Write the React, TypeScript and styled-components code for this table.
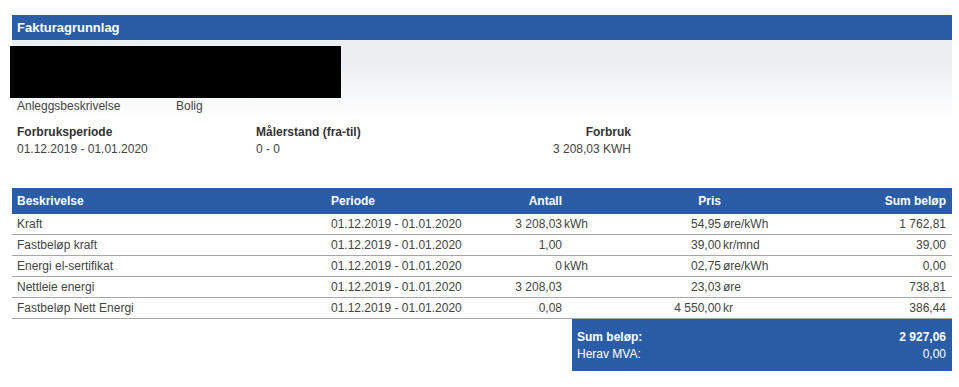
import React from "react";
import styled, { createGlobalStyle } from "styled-components";

const GlobalStyle = createGlobalStyle`
  html, body {
    margin: 0;
    padding: 0;
    background: #ffffff;
  }
  body {
    font-family: "Liberation Sans", Arial, sans-serif;
    font-size: 12px;
    color: #444444;
  }
`;

const BLUE = "#2a5da5";

const Page = styled.div`
  width: 940px;
  padding: 15px 7px 0 12px;
`;

const TitleBar = styled.div`
  height: 25px;
  background: ${BLUE};
  color: #ffffff;
  font-size: 13px;
  font-weight: bold;
  display: flex;
  align-items: center;
  padding-left: 5px;
`;

const InfoArea = styled.div`
  background: linear-gradient(to bottom, #eceff1 0px, #eceff1 25px, #ffffff 78px);
  padding-top: 6px;
`;

const Redacted = styled.div`
  width: 331px;
  height: 52px;
  margin-left: -2px;
  background: #000000;
`;

const FacilityRow = styled.div`
  display: flex;
  padding-left: 5px;
  height: 15px;
  line-height: 15px;
  margin-top: 1px;
`;

const FacilityLabel = styled.span`
  width: 159px;
`;

const UsageGrid = styled.div`
  display: grid;
  grid-template-columns: 239px 239px 136px;
  padding-left: 5px;
  margin-top: 10px;
  line-height: 17px;
`;

const UsageCell = styled.div<{ $right?: boolean }>`
  display: flex;
  flex-direction: column;
  align-items: ${(p) => (p.$right ? "flex-end" : "flex-start")};
`;

const UsageLabel = styled.span`
  font-weight: bold;
  color: #333333;
`;

const Table = styled.div`
  margin-top: 30px;
`;

const Row = styled.div<{ $head?: boolean }>`
  display: grid;
  grid-template-columns: 314px 150px 124px 200px 152px;
  align-items: center;
  height: ${(p) => (p.$head ? "26px" : "20px")};
  background: ${(p) => (p.$head ? BLUE : "transparent")};
  color: ${(p) => (p.$head ? "#ffffff" : "#444444")};
  font-weight: ${(p) => (p.$head ? "bold" : "normal")};
  border-bottom: ${(p) => (p.$head ? "none" : "1px solid #a6a6a6")};
`;

const TextCell = styled.div`
  padding-left: 5px;
  white-space: nowrap;
`;

const UnitCell = styled.div`
  display: flex;
  white-space: nowrap;
`;

const Num = styled.span<{ $w: number }>`
  width: ${(p) => p.$w}px;
  text-align: right;
`;

const Unit = styled.span`
  margin-left: 2px;
`;

const SumCell = styled.div`
  text-align: right;
  padding-right: 6px;
`;

const Footer = styled.div`
  display: flex;
  justify-content: flex-end;
`;

const TotalBox = styled.div`
  width: 369px;
  background: ${BLUE};
  color: #ffffff;
  padding: 10px 6px 8px 5px;
  display: grid;
  grid-template-columns: 1fr auto;
  line-height: 17px;
`;

const TotalValue = styled.span<{ $bold?: boolean }>`
  text-align: right;
  font-weight: ${(p) => (p.$bold ? "bold" : "normal")};
`;

const TotalLabel = styled.span<{ $bold?: boolean }>`
  font-weight: ${(p) => (p.$bold ? "bold" : "normal")};
`;

type Line = {
  desc: string;
  qty: string;
  qtyUnit?: string;
  price: string;
  priceUnit: string;
  sum: string;
};

const PERIOD = "01.12.2019 - 01.01.2020";

const lines: Line[] = [
  { desc: "Kraft", qty: "3 208,03", qtyUnit: "kWh", price: "54,95", priceUnit: "øre/kWh", sum: "1 762,81" },
  { desc: "Fastbeløp kraft", qty: "1,00", price: "39,00", priceUnit: "kr/mnd", sum: "39,00" },
  { desc: "Energi el-sertifikat", qty: "0", qtyUnit: "kWh", price: "02,75", priceUnit: "øre/kWh", sum: "0,00" },
  { desc: "Nettleie energi", qty: "3 208,03", price: "23,03", priceUnit: "øre", sum: "738,81" },
  { desc: "Fastbeløp Nett Energi", qty: "0,08", price: "4 550,00", priceUnit: "kr", sum: "386,44" },
];

export default function App() {
  return (
    <Page>
      <GlobalStyle />
      <TitleBar>Fakturagrunnlag</TitleBar>
      <InfoArea>
        <Redacted />
        <FacilityRow>
          <FacilityLabel>Anleggsbeskrivelse</FacilityLabel>
          <span>Bolig</span>
        </FacilityRow>
        <UsageGrid>
          <UsageCell>
            <UsageLabel>Forbruksperiode</UsageLabel>
            <span>{PERIOD}</span>
          </UsageCell>
          <UsageCell>
            <UsageLabel>Målerstand (fra-til)</UsageLabel>
            <span>0 - 0</span>
          </UsageCell>
          <UsageCell $right>
            <UsageLabel>Forbruk</UsageLabel>
            <span>3 208,03 KWH</span>
          </UsageCell>
        </UsageGrid>
      </InfoArea>

      <Table>
        <Row $head>
          <TextCell>Beskrivelse</TextCell>
          <TextCell>Periode</TextCell>
          <UnitCell>
            <Num $w={86}>Antall</Num>
          </UnitCell>
          <UnitCell>
            <Num $w={121}>Pris</Num>
          </UnitCell>
          <SumCell>Sum beløp</SumCell>
        </Row>
        {lines.map((l) => (
          <Row key={l.desc}>
            <TextCell>{l.desc}</TextCell>
            <TextCell>{PERIOD}</TextCell>
            <UnitCell>
              <Num $w={86}>{l.qty}</Num>
              {l.qtyUnit && <Unit>{l.qtyUnit}</Unit>}
            </UnitCell>
            <UnitCell>
              <Num $w={121}>{l.price}</Num>
              <Unit>{l.priceUnit}</Unit>
            </UnitCell>
            <SumCell>{l.sum}</SumCell>
          </Row>
        ))}
      </Table>

      <Footer>
        <TotalBox>
          <TotalLabel $bold>Sum beløp:</TotalLabel>
          <TotalValue $bold>2 927,06</TotalValue>
          <TotalLabel>Herav MVA:</TotalLabel>
          <TotalValue>0,00</TotalValue>
        </TotalBox>
      </Footer>
    </Page>
  );
}
